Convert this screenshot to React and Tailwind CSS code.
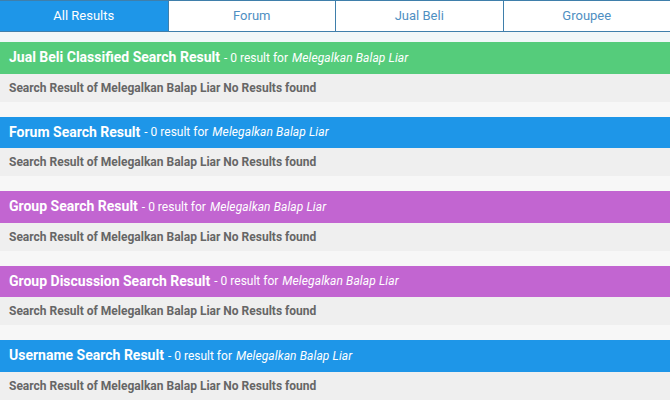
const query = 'Melegalkan Balap Liar'

const sections = [
  { title: 'Jual Beli Classified Search Result', color: 'bg-[#55cc7b]' },
  { title: 'Forum Search Result', color: 'bg-[#1e96e8]' },
  { title: 'Group Search Result', color: 'bg-[#c265d1]' },
  { title: 'Group Discussion Search Result', color: 'bg-[#c265d1]' },
  { title: 'Username Search Result', color: 'bg-[#1e96e8]' },
]

const tabs = ['All Results', 'Forum', 'Jual Beli', 'Groupee']

export default function App() {
  return (
    <div className="w-[670px] h-[400px] overflow-hidden bg-[#f7f7f7] font-['Roboto',sans-serif]">
      <div className="grid grid-cols-4 h-[32px] border-y border-[#3f7fab] bg-white">
        {tabs.map((t, i) => (
          <div
            key={t}
            className={
              i === 0
                ? 'flex items-center justify-center bg-[#1e96e8] text-white text-[13px]'
                : 'flex items-center justify-center border-l border-[#3f7fab] text-[#4f8fc2] text-[13px]'
            }
          >
            {t}
          </div>
        ))}
      </div>
      <div className="h-[10px] bg-[#f1f7f8]" />

      {sections.map((s) => (
        <div key={s.title} className="mb-[15px]">
          <div className={`${s.color} h-[31.5px] flex items-center px-[9px] text-white`}>
            <span className="text-[14px] font-bold">{s.title}</span>
            <span className="text-[12px] ml-[4px]">- 0 result for</span>
            <span className="text-[12px] italic ml-[4px] tracking-[0.1px]">{query}</span>
          </div>
          <div className="h-[28px] flex items-center px-[9px] bg-[#efefef] text-[#666666] text-[12px] font-bold">
            Search Result of {query} No Results found
          </div>
        </div>
      ))}
    </div>
  )
}
